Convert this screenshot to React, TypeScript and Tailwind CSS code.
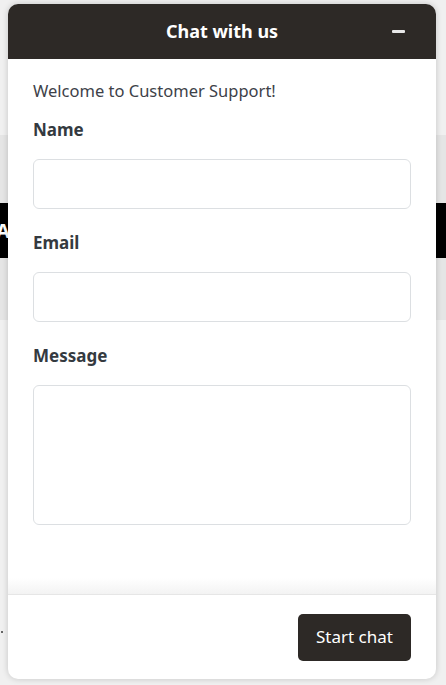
import React from "react";

const font = { fontFamily: '"Noto Sans", "Open Sans", sans-serif' };

function Field({ label, area }: { label: string; area?: boolean }) {
  return (
    <div className="flex flex-col">
      <label className="text-[17px] leading-6 font-bold text-[#343a40]">{label}</label>
      {area ? (
        <textarea className="mt-[17px] h-[140px] w-full resize-none rounded-[6px] border border-[#dcdfe2] bg-white outline-none" />
      ) : (
        <input className="mt-[17px] h-[50px] w-full rounded-[6px] border border-[#dcdfe2] bg-white outline-none" />
      )}
    </div>
  );
}

export default function App() {
  return (
    <div className="relative h-[685px] w-[446px] overflow-hidden bg-[#f0f0f0]" style={font}>
      {/* page content behind the widget */}
      <div className="mt-[135px] flex h-[185px] flex-col bg-[#e5e5e5] pt-[68px]">
        <div className="flex h-[55px] items-center bg-black">
          <span className="-ml-[4px] text-[20px] font-bold text-white">AI</span>
        </div>
      </div>
      <div className="absolute left-[1px] top-[631px] h-[2px] w-[2px] bg-[#666]" />

      {/* chat widget */}
      <div className="absolute left-[8px] top-[4px] flex h-[675px] w-[428px] flex-col overflow-hidden rounded-[10px] bg-white shadow-[0_0_6px_rgba(0,0,0,0.18)]">
        <div className="relative flex h-[55px] shrink-0 items-center justify-center bg-[#2d2926]">
          <span className="text-[18px] font-bold text-white">Chat with us</span>
          <button className="absolute right-[31px] top-[26px] h-[3px] w-[13px] rounded-[1px] bg-[#e8e8e8]" />
        </div>
        <div className="relative flex flex-1 flex-col px-[25px] pt-[20px]">
          <p className="text-[16.5px] leading-6 text-[#3d4148]">Welcome to Customer Support!</p>
          <div className="mt-[15px] flex flex-col gap-[22px]">
            <Field label="Name" />
            <Field label="Email" />
            <Field label="Message" area />
          </div>
          <div className="absolute bottom-0 left-0 right-0 h-[16px] bg-gradient-to-b from-white to-[#f3f3f3]" />
        </div>
        <div className="flex h-[85px] shrink-0 items-center justify-end border-t border-[#e6e6e6] pr-[25px]">
          <button className="h-[47px] w-[113px] rounded-[5px] bg-[#2d2926] text-[17px] text-white">Start chat</button>
        </div>
      </div>
    </div>
  );
}
